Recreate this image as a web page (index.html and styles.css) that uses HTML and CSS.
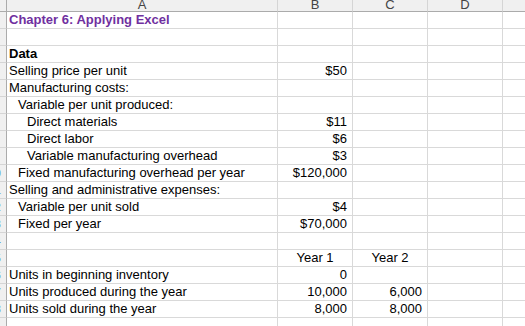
FILE: index.html
```html
<!DOCTYPE html>
<html>
<head>
<meta charset="utf-8">
<link rel="stylesheet" href="styles.css">
</head>
<body>
<div class="sheet">
  <div class="hd corner"></div>
  <div class="hd"><span class="hl">A</span></div>
  <div class="hd"><span class="hl">B</span></div>
  <div class="hd"><span class="hl">C</span></div>
  <div class="hd"><span class="hl">D</span></div>
  <div class="hd last"></div>

  <div class="rh"></div><div class="c title">Chapter 6: Applying Excel</div><div class="c"></div><div class="c"></div><div class="c"></div><div class="c last"></div>
  <div class="rh"></div><div class="c"></div><div class="c"></div><div class="c"></div><div class="c"></div><div class="c last"></div>
  <div class="rh"></div><div class="c bold">Data</div><div class="c"></div><div class="c"></div><div class="c"></div><div class="c last"></div>
  <div class="rh"></div><div class="c">Selling price per unit</div><div class="c r">$50</div><div class="c"></div><div class="c"></div><div class="c last"></div>
  <div class="rh"></div><div class="c">Manufacturing costs:</div><div class="c"></div><div class="c"></div><div class="c"></div><div class="c last"></div>
  <div class="rh"></div><div class="c i1">Variable per unit produced:</div><div class="c"></div><div class="c"></div><div class="c"></div><div class="c last"></div>
  <div class="rh"></div><div class="c i2">Direct materials</div><div class="c r">$11</div><div class="c"></div><div class="c"></div><div class="c last"></div>
  <div class="rh"></div><div class="c i2">Direct labor</div><div class="c r">$6</div><div class="c"></div><div class="c"></div><div class="c last"></div>
  <div class="rh"></div><div class="c i2">Variable manufacturing overhead</div><div class="c r">$3</div><div class="c"></div><div class="c"></div><div class="c last"></div>
  <div class="rh"><span class="rn">10</span></div><div class="c i1">Fixed manufacturing overhead per year</div><div class="c r">$120,000</div><div class="c"></div><div class="c"></div><div class="c last"></div>
  <div class="rh"><span class="rn">11</span></div><div class="c">Selling and administrative expenses:</div><div class="c"></div><div class="c"></div><div class="c"></div><div class="c last"></div>
  <div class="rh"><span class="rn">12</span></div><div class="c i1">Variable per unit sold</div><div class="c r">$4</div><div class="c"></div><div class="c"></div><div class="c last"></div>
  <div class="rh"><span class="rn">13</span></div><div class="c i1">Fixed per year</div><div class="c r">$70,000</div><div class="c"></div><div class="c"></div><div class="c last"></div>
  <div class="rh"><span class="rn">14</span></div><div class="c"></div><div class="c"></div><div class="c"></div><div class="c"></div><div class="c last"></div>
  <div class="rh"><span class="rn">15</span></div><div class="c"></div><div class="c ctr">Year 1</div><div class="c ctr">Year 2</div><div class="c"></div><div class="c last"></div>
  <div class="rh"><span class="rn">16</span></div><div class="c">Units in beginning inventory</div><div class="c r">0</div><div class="c"></div><div class="c"></div><div class="c last"></div>
  <div class="rh"><span class="rn">17</span></div><div class="c">Units produced during the year</div><div class="c r">10,000</div><div class="c r">6,000</div><div class="c"></div><div class="c last"></div>
  <div class="rh"><span class="rn">18</span></div><div class="c">Units sold during the year</div><div class="c r">8,000</div><div class="c r">8,000</div><div class="c"></div><div class="c last"></div>
  <div class="rh"></div><div class="c"></div><div class="c"></div><div class="c"></div><div class="c"></div><div class="c last"></div>
</div>
</body>
</html>
```

FILE: styles.css
```css
html, body {
  margin: 0;
  padding: 0;
  background: #ffffff;
  overflow: hidden;
}

.sheet {
  display: grid;
  grid-template-columns: 7px 271px 75px 75px 75px 1fr;
  grid-template-rows: 12px;
  grid-auto-rows: 17px;
  width: 525px;
  font-family: "Liberation Sans", Arial, sans-serif;
  font-size: 13px;
  color: #000000;
}

.hd {
  box-sizing: border-box;
  background: #f0f0f0;
  border-right: 1px solid #d5d5d5;
  border-bottom: 1px solid #ababab;
  overflow: hidden;
  display: flex;
  justify-content: center;
  align-items: flex-end;
  color: #444444;
  line-height: 15px;
}

.hd.corner {
  border-right: 1px solid #ababab;
}

.hl {
  display: block;
  position: relative;
  top: 1px;
}

.rh {
  box-sizing: border-box;
  background: #f0f0f0;
  border-right: 1px solid #ababab;
  border-bottom: 1px solid #d5d5d5;
  overflow: hidden;
  display: flex;
  justify-content: flex-end;
  align-items: center;
  padding-right: 5px;
}

.rn {
  flex: none;
  white-space: nowrap;
  font-size: 11px;
  line-height: 14px;
  color: #5b9bd5;
}

.c {
  box-sizing: border-box;
  border-right: 1px solid #d9d9d9;
  border-bottom: 1px solid #d9d9d9;
  line-height: 15px;
  padding-left: 2px;
  padding-right: 2px;
  white-space: nowrap;
}

.last {
  border-right: none;
}

.title {
  font-weight: bold;
  color: #7030a0;
}

.bold {
  font-weight: bold;
}

.i1 {
  padding-left: 11px;
}

.i2 {
  padding-left: 20px;
}

.r {
  text-align: right;
  padding-right: 5px;
}

.ctr {
  text-align: center;
}
```
